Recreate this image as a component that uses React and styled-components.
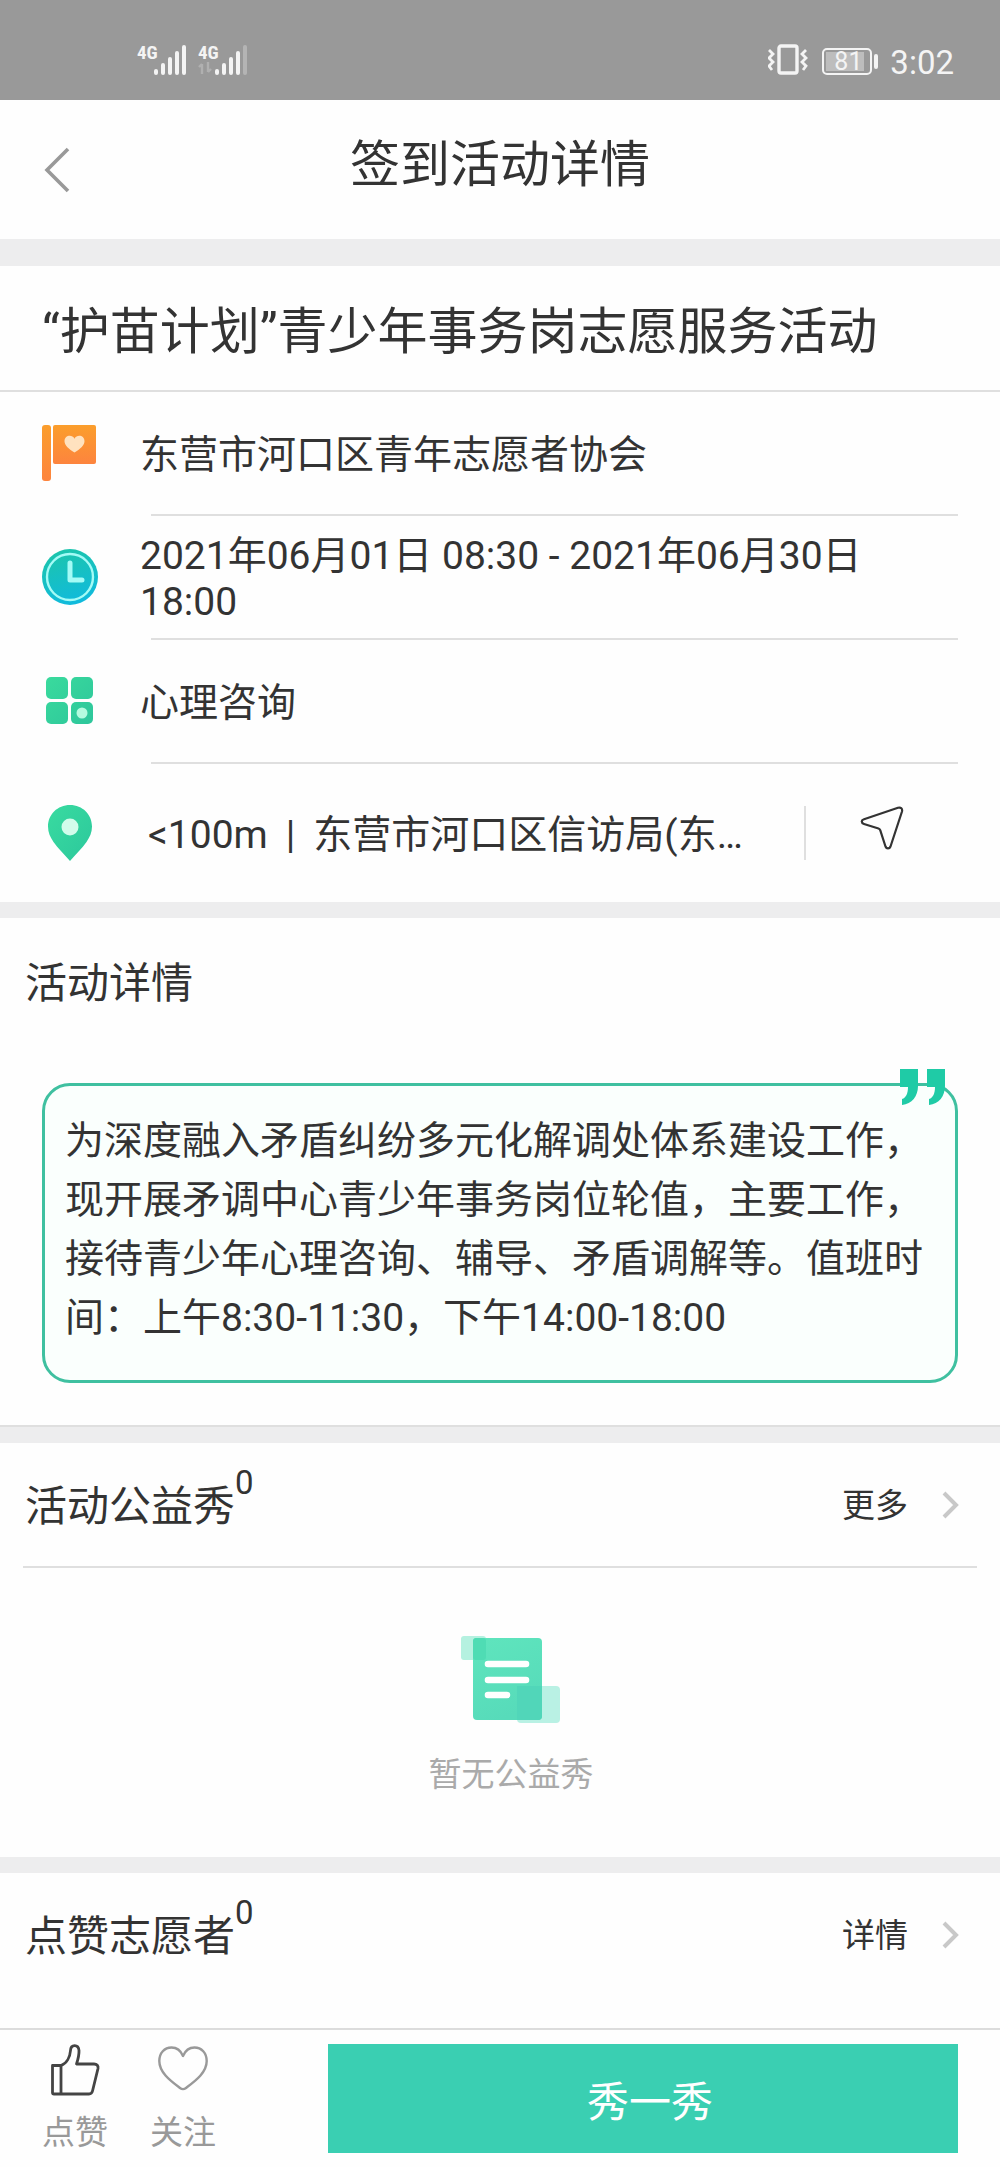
// Imports
import React from "react";
import styled, { createGlobalStyle } from "styled-components";

// Status bar icons
const SignalIcon = ({ weak }) => (
	<svg width="34" height="32" viewBox="0 0 34 32" fill="#f4f4f4" aria-hidden="true">
		<rect x="0" y="25" width="4" height="6" rx="2" />
		<rect x="7" y="19" width="4" height="12" rx="2" />
		<rect x="14" y="13" width="4" height="18" rx="2" />
		<rect x="21" y="7" width="4" height="24" rx="2" />
		<rect x="28" y="1" width="4" height="30" rx="2" opacity={ weak ? 0.3 : 1 } />
	</svg>
);

const DataArrowsIcon = () => (
	<svg width="14" height="12" viewBox="0 0 14 12" fill="none" stroke="#b0b0b0" strokeWidth="2.4" aria-hidden="true">
		<path d="M4 12V2M1 5l3-3M10 0v10M10 10l3-3" />
	</svg>
);

const VibrateIcon = () => (
	<svg width="40" height="32" viewBox="0 0 40 32" fill="none" stroke="#f4f4f4" aria-hidden="true">
		<rect x="11" y="2" width="18" height="27" rx="2" strokeWidth="3.4" />
		<path d="M1 6l4 4-4 4 4 4-4 4 3 4M38 6l-4 4 4 4-4 4 4 4-3 4" strokeWidth="2.8" />
	</svg>
);

// Navigation icons
const BackIcon = () => (
	<svg width="26" height="46" viewBox="0 0 26 46" fill="none" stroke="#999" strokeWidth="3.6" aria-hidden="true">
		<path d="M24 2L3 23l21 21" />
	</svg>
);

const MoreIcon = () => (
	<svg width="18" height="28" viewBox="0 0 18 28" fill="none" stroke="#c8c8c8" strokeWidth="4" aria-hidden="true">
		<path d="M2 2l12 12L2 26" />
	</svg>
);

const SendIcon = () => (
	<svg width="44" height="44" viewBox="0 0 44 44" fill="none" stroke="#333" strokeWidth="2.2" strokeLinejoin="round" aria-hidden="true">
		<path d="M38 1.8L4 13.2c-3 1-3 3.800 0 4.800L18.500 22.500c1 .3 1.500.9 1.800 1.800L25.500 40.500c1 2.600 4 2.600 5 0L42 5.500C42.600 2.700 41 1 38 1.800z" />
	</svg>
);

// Info icons
const FlagIcon = () => (
	<svg width="56" height="58" viewBox="0 0 56 58" aria-hidden="true">
		<defs>
			<linearGradient id="flag" x1="0" y1="0" x2="0" y2="1">
				<stop offset="0" stopColor="#fb9e2c" />
				<stop offset="1" stopColor="#fd843e" />
			</linearGradient>
		</defs>
		<rect x="0" y="1" width="9" height="56" rx="3" fill="url(#flag)" />
		<rect x="11" y="1" width="43" height="39" rx="2" fill="url(#flag)" />
		<path d="M32.500 28.500C27 25 22.500 21.500 22.500 17.200c0-6 7.500-7.200 10-2.500 2.500-4.700 10-3.500 10 2.500 0 4.300-4.500 7.800-10 11.300z" fill="#ffe2bf" />
	</svg>
);

const ClockIcon = () => (
	<svg width="58" height="58" viewBox="0 0 58 58" fill="none" aria-hidden="true">
		<defs>
			<linearGradient id="clock" x1="0.3" y1="0" x2="0.6" y2="1">
				<stop offset="0" stopColor="#1cc5ab" />
				<stop offset="1" stopColor="#10bade" />
			</linearGradient>
		</defs>
		<circle cx="29" cy="29" r="28" fill="url(#clock)" />
		<circle cx="29" cy="29" r="23" stroke="#a4fbf6" strokeWidth="2.4" />
		<path d="M29 15v17h12" stroke="#a4fbf6" strokeWidth="5" strokeLinecap="round" strokeLinejoin="round" />
	</svg>
);

const CategoryIcon = () => (
	<svg width="50" height="50" viewBox="0 0 50 50" aria-hidden="true">
		<defs>
			<linearGradient id="category" x1="0" y1="0" x2="50" y2="50" gradientUnits="userSpaceOnUse">
				<stop offset="0" stopColor="#3adb9d" />
				<stop offset="1" stopColor="#2dc59b" />
			</linearGradient>
		</defs>
		<g fill="url(#category)">
			<rect x="1" y="1" width="22" height="22" rx="5" />
			<rect x="26" y="1" width="22" height="22" rx="5" />
			<rect x="1" y="26" width="22" height="22" rx="5" />
			<rect x="26" y="26" width="22" height="22" rx="5" />
		</g>
		<circle cx="37" cy="37" r="5.500" fill="#b4fbdf" />
	</svg>
);

const PinIcon = () => (
	<svg width="46" height="58" viewBox="0 0 46 58" aria-hidden="true">
		<defs>
			<linearGradient id="pin" x1="0" y1="0" x2="1" y2="1">
				<stop offset="0" stopColor="#39dba0" />
				<stop offset="1" stopColor="#2cc89c" />
			</linearGradient>
		</defs>
		<path d="M23 1C10.500 1 1 10.500 1 22.500c0 6 2.200 10.500 5.500 15.500C11 44.500 17 50 23 57c6-7 12-12.500 16.500-19C42.800 33 45 28.500 45 22.500 45 10.500 35.500 1 23 1z" fill="url(#pin)" />
		<circle cx="23" cy="23" r="8.500" fill="#d2fceb" />
	</svg>
);

const QuoteIcon = () => (
	<svg width="46" height="36" viewBox="0 0 46 36" fill="#1fcba6" aria-hidden="true">
		<path d="M0 0h18v17c0 10-6 18-16 19v-6c4-1 6-6 6-12H0z" />
		<path d="M27 0h18v17c0 10-6 18-16 19v-6c4-1 6-6 6-12h-8z" />
	</svg>
);

const EmptyIcon = () => (
	<svg width="100" height="88" viewBox="0 0 100 88" aria-hidden="true">
		<defs>
			<linearGradient id="paper" x1="0" y1="0" x2="0.4" y2="1">
				<stop offset="0" stopColor="#5fe5bd" />
				<stop offset="1" stopColor="#57dbba" />
			</linearGradient>
		</defs>
		<rect x="0" y="1" width="25" height="24" rx="3" fill="#b5f1e0" />
		<rect x="56" y="51" width="43" height="37" rx="4" fill="#b9f1e4" />
		<rect x="12" y="3" width="69" height="82" rx="4" fill="url(#paper)" />
		<rect x="12" y="3" width="13" height="22" rx="3" fill="#4fdcb4" />
		<path d="M56 51h25v30a4 4 0 0 1-4 4H56z" fill="#51d6b9" />
		<path d="M27 29h38M27 45h38M27 60h19" stroke="#fff" strokeWidth="6.600" strokeLinecap="round" />
	</svg>
);

// Footer icons
const LikeIcon = () => (
	<svg width="50" height="52" viewBox="0 0 50 52" fill="none" stroke="#444" strokeWidth="2.800" strokeLinejoin="round" aria-hidden="true">
		<path d="M2.500 21.500h8.500c5.500-2 9-8 9.500-15 .3-6.500 8-6.500 8.500 0 .2 5-1 9-2.500 13.500H44c3 0 4.500 1.800 4 4.500L42.500 47c-.5 2-1.500 3-3.500 3H4c-1 0-1.500-.5-1.500-1.500z" />
		<path d="M11 21.500V50" />
	</svg>
);

const HeartIcon = () => (
	<svg width="50" height="52" viewBox="0 0 50 52" fill="none" stroke="#999" strokeWidth="2.400" strokeLinejoin="round" aria-hidden="true">
		<path d="M25 12C22.500 6 18 3.500 13.500 3.500 6.500 3.500 1.300 9 1.300 17c0 12 12.200 20.500 20.700 27 2 1.500 4 1.500 6 0 8.500-6.500 20.700-15 20.700-27 0-8-5.200-13.500-12.200-13.500C32 3.500 27.500 6 25 12z" />
	</svg>
);

// Section title with its counter and link
const SectionHead = ({ title, count, link }) => (
	<HeadRow>
		<h2>{ title }<sup>{ count }</sup></h2>
		<a href="#more"><span>{ link }</span><MoreIcon /></a>
	</HeadRow>
);

// Component
const App = () => {

	// Return
	return(
		<React.Fragment>
			<GlobalStyle />
			<Page>
				<StatusBar>
					<div className="signals">
						<Signal><div><span>4G</span></div><SignalIcon /></Signal>
						<Signal>
							<div><span>4G</span><DataArrowsIcon /></div>
							<SignalIcon weak />
						</Signal>
					</div>
					<div className="system">
						<VibrateIcon />
						<Battery><span>81</span></Battery>
						<time>3:02</time>
					</div>
				</StatusBar>

				<NavBar>
					<button type="button" aria-label="返回"><BackIcon /></button>
					<h1>签到活动详情</h1>
				</NavBar>
				<Gap $size="27px" />

				<main>
					<ActivityTitle>“护苗计划”青少年事务岗志愿服务活动</ActivityTitle>
					<InfoRow>
						<div className="icon"><FlagIcon /></div>
						<p>东营市河口区青年志愿者协会</p>
					</InfoRow>
					<Rule $left="151px" $right="42px" />
					<InfoRow>
						<div className="icon"><ClockIcon /></div>
						<p>2021年06月01日 08:30 - 2021年06月30日 18:00</p>
					</InfoRow>
					<Rule $left="151px" $right="42px" />
					<InfoRow>
						<div className="icon"><CategoryIcon /></div>
						<p>心理咨询</p>
					</InfoRow>
					<Rule $left="151px" $right="42px" />
					<InfoRow $tall>
						<div className="icon"><PinIcon /></div>
						<p className="place">
							<span>&lt;100m</span>
							<span>|</span>
							<span>东营市河口区信访局(东…</span>
						</p>
						<button type="button" aria-label="导航"><SendIcon /></button>
					</InfoRow>
					<Gap $size="16px" />

					<Details>
						<h2>活动详情</h2>
						<QuoteBox>
							<div className="mark"><QuoteIcon /></div>
							<p>为深度融入矛盾纠纷多元化解调处体系建设工作，现开展矛调中心青少年事务岗位轮值，主要工作，接待青少年心理咨询、辅导、矛盾调解等。值班时间：上午8:30-11:30，下午14:00-18:00</p>
						</QuoteBox>
					</Details>
					<Gap $size="18px" $edge />

					<SectionHead title="活动公益秀" count="0" link="更多" />
					<Rule $left="23px" $right="23px" />
					<Empty>
						<EmptyIcon />
						<p>暂无公益秀</p>
					</Empty>
					<Gap $size="16px" />

					<SectionHead title="点赞志愿者" count="0" link="详情" />
				</main>

				<Footer>
					<Action type="button"><LikeIcon />点赞</Action>
					<Action type="button"><HeartIcon />关注</Action>
					<ShowButton type="button">秀一秀</ShowButton>
				</Footer>
			</Page>
		</React.Fragment>
	);

};

// Styled
const GlobalStyle = createGlobalStyle`
	*{
		box-sizing: border-box;
	}
	body{
		margin: 0;
		background-color: #fefefe;
		color: #333;
		font-family: Roboto, "Noto Sans CJK SC", sans-serif;
	}
	h1, h2, p{
		margin: 0;
		font-weight: 400;
	}
	button{
		font: inherit;
		color: inherit;
		background: none;
		border: none;
		padding: 0;
		cursor: pointer;
	}
	svg{
		display: block;
		flex-shrink: 0;
	}
`;

const Page = styled.div`
	min-height: 100vh;
	display: flex;
	flex-direction: column;
	main{
		flex: 1;
	}
`;

const StatusBar = styled.div`
	height: 100px;
	display: flex;
	justify-content: space-between;
	padding: 44px 46px 0 137px;
	background-color: #999;
	color: #f4f4f4;
	.signals, .system{
		display: flex;
		align-items: flex-start;
	}
	.signals{
		gap: 10px;
	}
	.system{
		gap: 14px;
		time{
			font-size: 33px;
			line-height: 38px;
		}
	}
`;

const Signal = styled.div`
	display: flex;
	div{
		width: 17px;
		height: 32px;
	}
	span{
		display: block;
		font-size: 19px;
		font-weight: 700;
		line-height: 18px;
		font-family: "Roboto Condensed", Roboto, sans-serif;
	}
`;

const Battery = styled.div`
	position: relative;
	width: 50px;
	height: 27px;
	margin: 4px 4px 0 0;
	padding: 2px;
	border: 2px solid #f4f4f4;
	border-radius: 5px;
	span{
		display: block;
		width: 38px;
		height: 19px;
		padding-left: 8px;
		background-color: #bdbdbd;
		font-size: 25px;
		line-height: 20px;
	}
	&::after{
		content: "";
		position: absolute;
		top: 4px;
		right: -8px;
		width: 4px;
		height: 15px;
		border-radius: 2px;
		background-color: #f4f4f4;
	}
`;

const NavBar = styled.header`
	height: 139px;
	display: grid;
	grid-template-columns: 100px 1fr 100px;
	align-items: center;
	button{
		padding-left: 44px;
	}
	h1{
		font-size: 50px;
		line-height: 60px;
		text-align: center;
		padding-bottom: 10px;
	}
`;

const Gap = styled.div`
	height: ${ ({ $size }) => $size };
	background-color: #ededee;
	border-top: ${ ({ $edge }) => $edge ? "2px solid #dfdfdf" : "none" };
`;

const Rule = styled.div`
	height: 2px;
	margin-left: ${ ({ $left }) => $left };
	margin-right: ${ ({ $right }) => $right };
	background-color: #dfdfdf;
`;

const ActivityTitle = styled.h2`
	padding: 36px 42px 28px;
	border-bottom: 2px solid #dfdfdf;
	font-size: 50px;
	line-height: 60px;
`;

const InfoRow = styled.div`
	min-height: ${ ({ $tall }) => $tall ? "138px" : "122px" };
	display: flex;
	align-items: center;
	padding: 0 42px 0 40px;
	.icon{
		width: 60px;
		flex-shrink: 0;
		display: flex;
		justify-content: center;
	}
	p{
		flex: 1;
		padding: 4px 0 0 40px;
		font-size: 39px;
		line-height: 46px;
	}
	.place{
		display: flex;
		gap: 18px;
		padding-left: 48px;
		white-space: nowrap;
	}
	button{
		height: 54px;
		padding: 0 54px 10px;
		border-left: 2px solid #dfdfdf;
	}
`;

const Details = styled.section`
	padding: 0 42px 42px;
	h2{
		margin-left: -17px;
		padding: 34px 0 67px;
		font-size: 42px;
		line-height: 64px;
	}
`;

const QuoteBox = styled.div`
	position: relative;
	padding: 26px 20px 32px;
	border: 3px solid #3fc0a0;
	border-radius: 28px;
	background-color: #fafffd;
	font-size: 39px;
	line-height: 59px;
	.mark{
		position: absolute;
		top: -17px;
		right: 9px;
	}
`;

const HeadRow = styled.div`
	height: 123px;
	display: flex;
	justify-content: space-between;
	align-items: center;
	padding: 0 40px 0 25px;
	h2{
		display: flex;
		font-size: 42px;
		line-height: 60px;
		padding-top: 4px;
	}
	sup{
		font-size: 33px;
		line-height: 12px;
	}
	a{
		display: flex;
		align-items: center;
		gap: 34px;
		color: inherit;
		text-decoration: none;
		font-size: 33px;
		line-height: 40px;
		span{
			padding-top: 2px;
		}
	}
`;

const Empty = styled.div`
	height: 289px;
	display: flex;
	flex-direction: column;
	align-items: center;
	gap: 32px;
	padding: 67px 0 0 22px;
	color: #aaa;
	font-size: 33px;
	line-height: 40px;
`;

const Footer = styled.footer`
	display: flex;
	padding: 14px 42px;
	border-top: 2px solid #dcdcdc;
`;

const Action = styled.button`
	width: 66px;
	display: flex;
	flex-direction: column;
	align-items: center;
	gap: 17px;
	margin-right: 42px;
	&&{
		color: #999;
		font-size: 33px;
		line-height: 40px;
	}
`;

const ShowButton = styled.button`
	flex: 1;
	height: 109px;
	margin-left: 70px;
	&&{
		padding-left: 14px;
		background-color: #3acfb2;
		color: #fff;
		font-size: 42px;
	}
`;

// Export
export default App;
